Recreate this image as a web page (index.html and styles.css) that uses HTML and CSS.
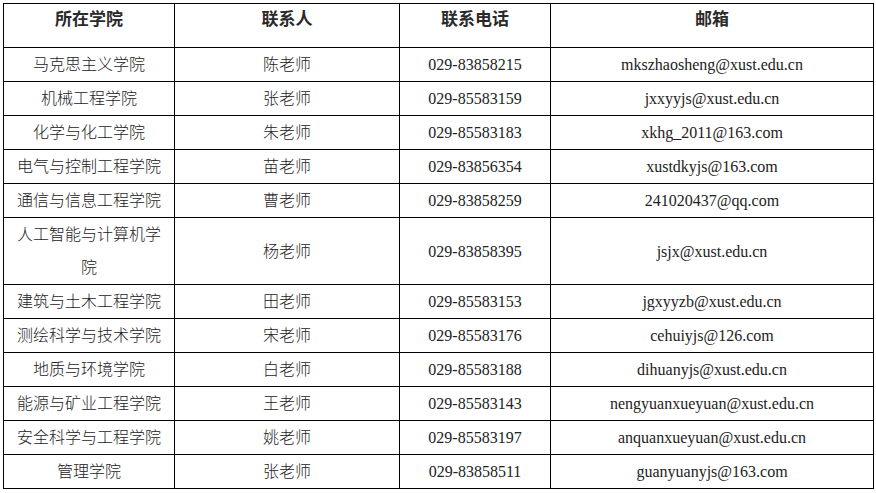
FILE: index.html
```html
<!DOCTYPE html>
<html lang="zh-CN">
<head>
<meta charset="utf-8">
<title>联系方式</title>
<link rel="stylesheet" href="styles.css">
</head>
<body>
<table class="contacts">
  <colgroup>
    <col class="c1"><col class="c2"><col class="c3"><col class="c4">
  </colgroup>
  <thead>
    <tr><th>所在学院</th><th>联系人</th><th>联系电话</th><th>邮箱</th></tr>
  </thead>
  <tbody>
    <tr><td>马克思主义学院</td><td>陈老师</td><td>029-83858215</td><td>mkszhaosheng@xust.edu.cn</td></tr>
    <tr><td>机械工程学院</td><td>张老师</td><td>029-85583159</td><td>jxxyyjs@xust.edu.cn</td></tr>
    <tr><td>化学与化工学院</td><td>朱老师</td><td>029-85583183</td><td>xkhg_2011@163.com</td></tr>
    <tr><td>电气与控制工程学院</td><td>苗老师</td><td>029-83856354</td><td>xustdkyjs@163.com</td></tr>
    <tr><td>通信与信息工程学院</td><td>曹老师</td><td>029-83858259</td><td>241020437@qq.com</td></tr>
    <tr><td>人工智能与计算机学院</td><td>杨老师</td><td>029-83858395</td><td>jsjx@xust.edu.cn</td></tr>
    <tr><td>建筑与土木工程学院</td><td>田老师</td><td>029-85583153</td><td>jgxyyzb@xust.edu.cn</td></tr>
    <tr><td>测绘科学与技术学院</td><td>宋老师</td><td>029-85583176</td><td>cehuiyjs@126.com</td></tr>
    <tr><td>地质与环境学院</td><td>白老师</td><td>029-85583188</td><td>dihuanyjs@xust.edu.cn</td></tr>
    <tr><td>能源与矿业工程学院</td><td>王老师</td><td>029-85583143</td><td>nengyuanxueyuan@xust.edu.cn</td></tr>
    <tr><td>安全科学与工程学院</td><td>姚老师</td><td>029-85583197</td><td>anquanxueyuan@xust.edu.cn</td></tr>
    <tr><td>管理学院</td><td>张老师</td><td>029-83858511</td><td>guanyuanyjs@163.com</td></tr>
  </tbody>
</table>
</body>
</html>
```

FILE: styles.css
```css
html, body {
  margin: 0;
  padding: 0;
  background: #ffffff;
}

body {
  padding: 3px;
  font-family: "Liberation Serif", "Noto Sans CJK SC", serif;
  font-size: 16px;
  color: #222222;
}

.contacts {
  border-collapse: collapse;
  table-layout: fixed;
  width: 870px;
}

.c1 { width: 171px; }
.c2 { width: 225px; }
.c3 { width: 151px; }
.c4 { width: 323px; }

.contacts th,
.contacts td {
  border: 1px solid #000000;
  text-align: center;
  padding: 0 8px;
}

.contacts th {
  height: 43px;
  line-height: 32px;
  vertical-align: top;
  font-size: 17px;
  font-weight: bold;
  color: #2a2a2a;
}

.contacts td {
  height: 33px;
  line-height: 33px;
  vertical-align: middle;
  font-weight: 300;
}
```
